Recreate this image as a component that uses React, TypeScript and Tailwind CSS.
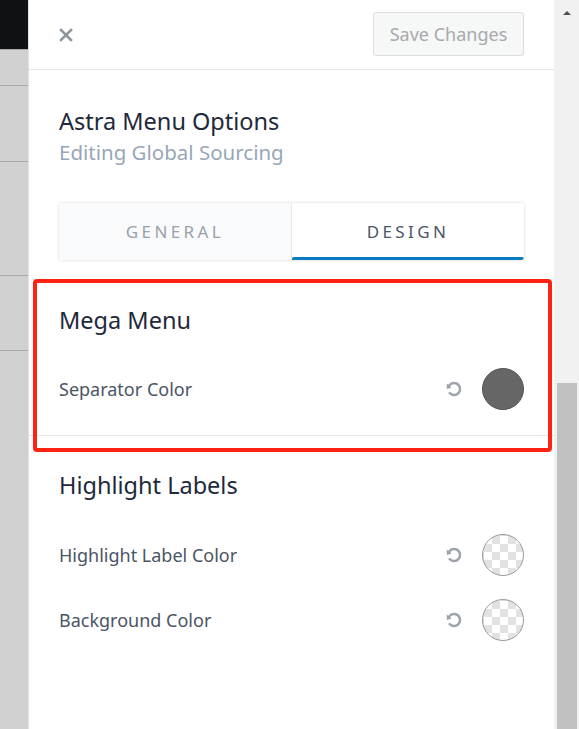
import React from "react";

function ResetIcon() {
  return (
    <svg viewBox="0 0 20 20" className="w-[16px] h-[16px] text-[#9ca3ad]" fill="currentColor">
      <path d="M10.25 1.02c5.1 0 8.75 4.04 8.75 9s-3.65 9-8.75 9c-3.2 0-6.02-1.59-7.68-3.990l2.59-1.52c1.1 1.5 2.86 2.51 4.84 2.51 3.3 0 6-2.79 6-6s-2.7-6-6-6c-1.97 0-3.72 1-4.82 2.49L7 8.02l-6 2v-7L2.89 4.6c1.69-2.17 4.36-3.58 7.36-3.58z" />
    </svg>
  );
}

function Swatch({ color }: { color?: string }) {
  if (color) {
    return <div className="w-[42px] h-[42px] rounded-full bg-[#666666] border border-[#555]" />;
  }
  return (
    <div className="w-[42px] h-[42px] rounded-full border border-[#9a9a9a] bg-white bg-[image:conic-gradient(#e2e2e2_25%,#ffffff_0_50%,#e2e2e2_0_75%,#ffffff_0)] bg-size-[16px_16px] bg-position-[1px_1px]" />
  );
}

function ColorRow({ label, color }: { label: string; color?: string }) {
  return (
    <div className="flex items-center justify-between h-[42px]">
      <span className="text-[18px] text-[#4b5565]">{label}</span>
      <div className="flex items-center gap-[20px]">
        <ResetIcon />
        <Swatch color={color} />
      </div>
    </div>
  );
}

export default function App() {
  return (
    <div className="relative flex w-[579px] h-[729px] overflow-hidden bg-white" style={{ fontFamily: '"Noto Sans", "Open Sans", sans-serif' }}>
      {/* left backdrop */}
      <div className="w-[28px] flex flex-col bg-[#d1d1d1]">
        <div className="h-[49px] bg-[#0f1114]" />
        <div className="h-[1px] bg-[#a9a9a9]" />
        <div className="h-[35px]" />
        <div className="h-[1px] bg-[#a9a9a9]" />
        <div className="h-[75px]" />
        <div className="h-[1px] bg-[#a9a9a9]" />
        <div className="h-[113px]" />
        <div className="h-[1px] bg-[#a9a9a9]" />
        <div className="h-[74px]" />
        <div className="h-[1px] bg-[#a9a9a9]" />
      </div>

      {/* panel */}
      <div className="flex-1 flex flex-col border-l border-[#dde3ea]">
        <div className="h-[70px] flex items-center justify-between pl-[30px] pr-[30px] border-b border-[#e2e6ec]">
          <svg viewBox="0 0 14 14" className="w-[14px] h-[14px] mt-[1px]" stroke="#8d96a0" strokeWidth="2.6" strokeLinecap="square">
            <path d="M2 2L12 12M12 2L2 12" />
          </svg>
          <button className="w-[151px] h-[44px] rounded-[3px] border border-[#dcdcde] bg-[#f6f7f7] text-[18px] text-[#a7aaad] mb-[1px]">
            Save Changes
          </button>
        </div>

        <div className="pl-[30px] pr-[30px]">
          <div className="mt-[36px] text-[23.5px] leading-[30px] text-[#1e293b]">Astra Menu Options</div>
          <div className="mt-[2px] text-[20.5px] leading-[28px] text-[#98a6b9]">Editing Global Sourcing</div>

          <div className="mt-[37px] flex h-[57px] rounded-[3px] shadow-[0_0_3px_rgba(0,0,0,0.18)] overflow-hidden">
            <div className="flex-1 flex items-center justify-center bg-[#f8fafc] border-r border-[#e5e9ef] text-[17px] tracking-[0.2em] text-[#9aa1ab]">
              GENERAL
            </div>
            <div className="relative flex-1 flex items-center justify-center bg-white text-[17px] tracking-[0.2em] text-[#4a5567]">
              DESIGN
              <div className="absolute left-0 right-0 bottom-0 h-[3px] bg-[#0a7bc2] rounded-t-[2px]" />
            </div>
          </div>

          <div className="mt-[45px] text-[23.5px] leading-[30px] text-[#1e293b]">Mega Menu</div>
          <div className="mt-[33px]">
            <ColorRow label="Separator Color" color="#666" />
          </div>
        </div>
        <div className="mt-[25px] h-[1px] bg-[#e2e6ec]" />

        <div className="pl-[30px] pr-[30px]">
          <div className="mt-[34px] text-[23.5px] leading-[30px] text-[#1e293b]">Highlight Labels</div>
          <div className="mt-[34px] flex flex-col gap-[23px]">
            <ColorRow label="Highlight Label Color" />
            <ColorRow label="Background Color" />
          </div>
        </div>
      </div>

      {/* scrollbar */}
      <div className="w-[25px] flex flex-col items-center bg-[#f1f1f1]">
        <div className="mt-[11px] w-0 h-0 border-l-[4px] border-r-[4px] border-b-[4px] border-l-transparent border-r-transparent border-b-[#505050]" />
        <div className="mt-[368px] w-[20px] flex-1 bg-[#c1c1c1]" />
      </div>

      {/* annotation */}
      <div className="absolute left-[33px] top-[279px] w-[519px] h-[173px] border-4 border-[#ff2213] rounded-[4px]" />
    </div>
  );
}
